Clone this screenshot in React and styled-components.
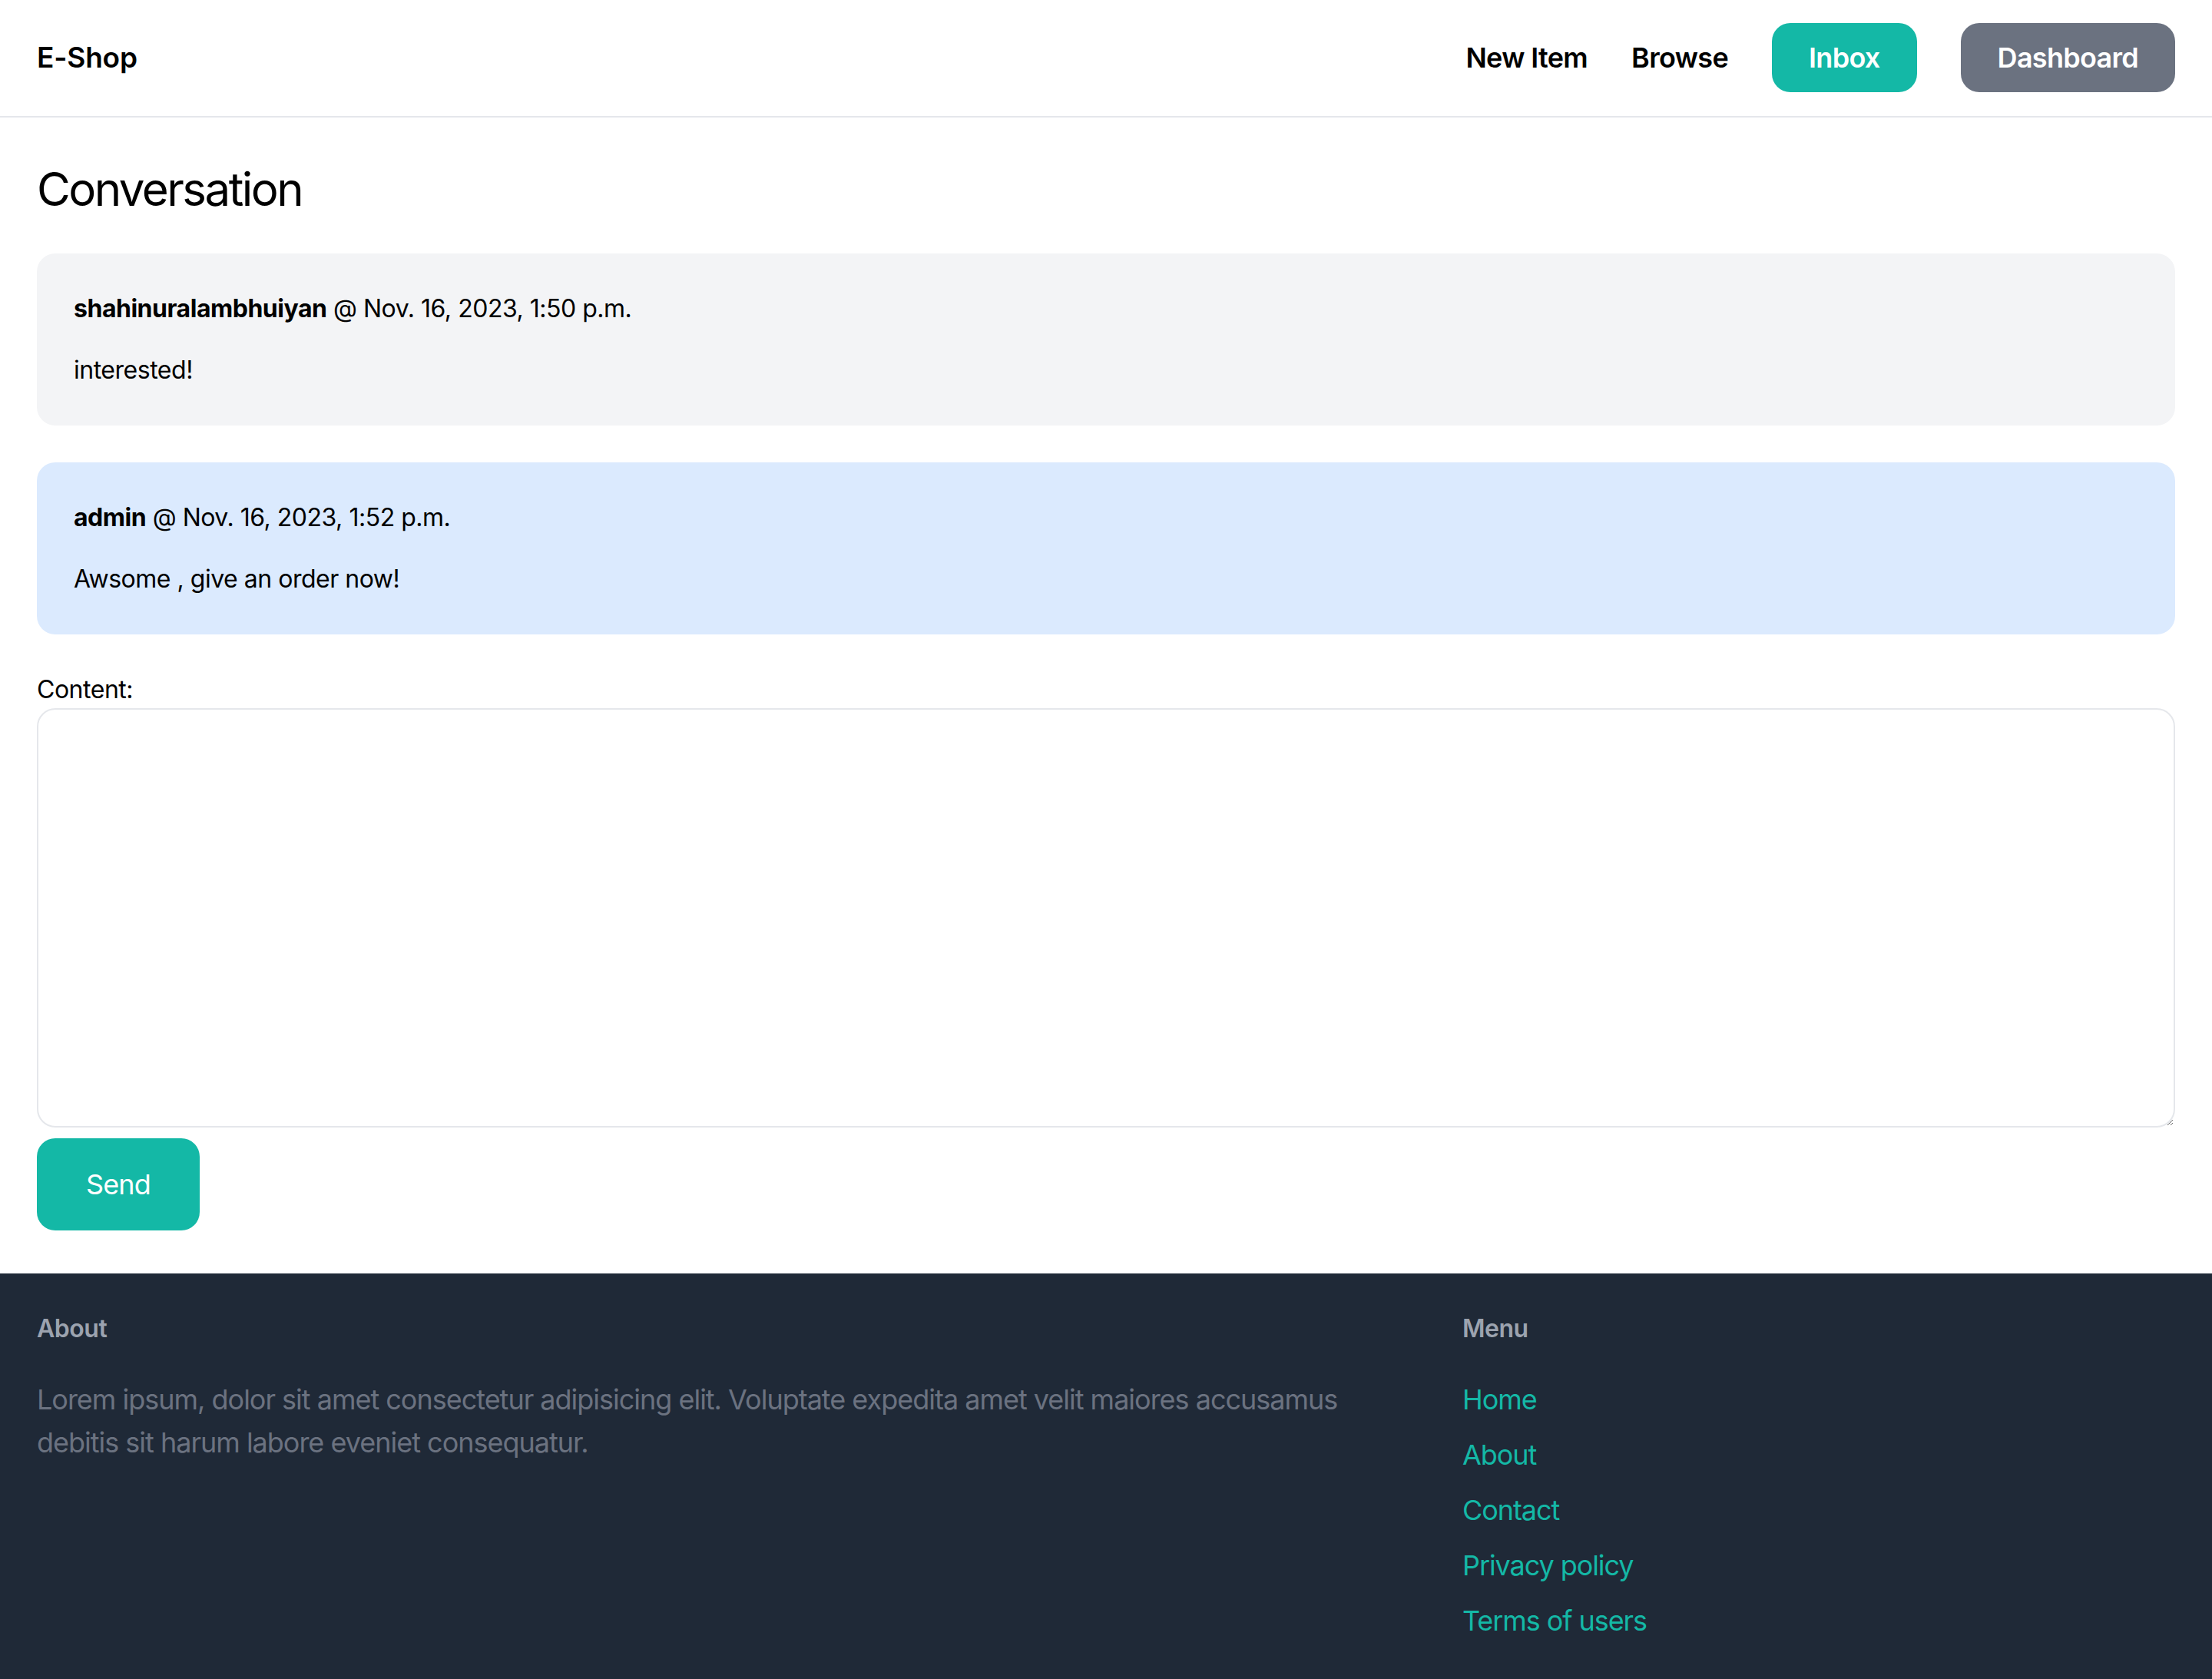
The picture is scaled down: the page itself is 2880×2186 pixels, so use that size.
import React from 'react';
import styled, { createGlobalStyle } from 'styled-components';

const GlobalStyle = createGlobalStyle`
  * {
    box-sizing: border-box;
  }
  body {
    margin: 0;
    font-family: Inter, 'Noto Sans', sans-serif;
    color: #000;
    background: #fff;
  }
  p {
    margin: 0;
  }
`;

const Nav = styled.nav`
  display: flex;
  align-items: center;
  justify-content: space-between;
  padding: 30px 48px 31px;
  border-bottom: 2px solid #e5e7eb;
`;

const Brand = styled.a`
  font-size: 37px;
  line-height: 56px;
  font-weight: 600;
  letter-spacing: -0.005em;
  color: #000;
  text-decoration: none;
`;

const NavLinks = styled.div`
  display: flex;
  align-items: center;
  gap: 57px;
`;

const NavLink = styled.a`
  font-size: 36px;
  line-height: 56px;
  font-weight: 600;
  letter-spacing: -0.018em;
  color: #000;
  text-decoration: none;
`;

const NavButton = styled.a`
  display: block;
  padding: 17px 48px;
  font-size: 36px;
  line-height: 56px;
  font-weight: 600;
  letter-spacing: -0.02em;
  color: #fff;
  text-decoration: none;
  border-radius: 24px;
  background-color: ${(p) => (p.$variant === 'gray' ? '#6b7280' : '#14b8a6')};
`;

const Main = styled.main`
  padding: 57px 48px 56px;
`;

const Title = styled.h1`
  margin: 0 0 48px;
  font-size: 60px;
  line-height: 72px;
  font-weight: 400;
  letter-spacing: -0.042em;
`;

const Message = styled.div`
  padding: 48px;
  margin-bottom: 48px;
  border-radius: 24px;
  background-color: ${(p) => (p.$mine ? '#dbeafe' : '#f3f4f6')};
  font-size: 32px;
  line-height: 48px;
  letter-spacing: -0.015em;
`;

const MessageMeta = styled.p`
  margin-bottom: 32px;
  strong {
    font-weight: 700;
  }
`;

const Label = styled.label`
  display: block;
  font-size: 32px;
  line-height: 48px;
  letter-spacing: -0.015em;
`;

const TextArea = styled.textarea`
  display: block;
  width: 100%;
  height: 546px;
  padding: 24px;
  border: 2px solid #e5e7eb;
  border-radius: 24px;
  font-family: inherit;
  font-size: 32px;
  outline: none;
  resize: vertical;
`;

const SendButton = styled.button`
  margin-top: 14px;
  padding: 32px 64px;
  border: none;
  border-radius: 24px;
  background-color: #14b8a6;
  color: #fff;
  font-family: inherit;
  font-size: 36px;
  line-height: 56px;
  letter-spacing: -0.025em;
  cursor: pointer;
`;

const Footer = styled.footer`
  display: flex;
  padding: 48px;
  background-color: #1f2937;
`;

const FooterAbout = styled.div`
  width: 66.6667%;
  padding-right: 80px;
`;

const FooterMenu = styled.div`
  width: 33.3333%;
`;

const FooterHeading = styled.h3`
  margin: 0 0 40px;
  font-size: 32px;
  line-height: 48px;
  font-weight: 600;
  letter-spacing: -0.015em;
  color: #9ca3af;
`;

const FooterText = styled.p`
  font-size: 36px;
  line-height: 56px;
  letter-spacing: -0.028em;
  color: #6b7280;
`;

const MenuList = styled.ul`
  margin: 0;
  padding: 0;
  list-style: none;
  display: flex;
  flex-direction: column;
  gap: 16px;
`;

const MenuLink = styled.a`
  display: block;
  font-size: 36px;
  line-height: 56px;
  letter-spacing: -0.03em;
  color: #14b8a6;
  text-decoration: none;
`;

const messages = [
  {
    user: 'shahinuralambhuiyan',
    date: 'Nov. 16, 2023, 1:50 p.m.',
    body: 'interested!',
    mine: false,
  },
  {
    user: 'admin',
    date: 'Nov. 16, 2023, 1:52 p.m.',
    body: 'Awsome , give an order now!',
    mine: true,
  },
];

const menu = ['Home', 'About', 'Contact', 'Privacy policy', 'Terms of users'];

function App() {
  return (
    <>
      <GlobalStyle />
      <Nav>
        <Brand href="#">E-Shop</Brand>
        <NavLinks>
          <NavLink href="#">New Item</NavLink>
          <NavLink href="#">Browse</NavLink>
          <NavButton href="#">Inbox</NavButton>
          <NavButton href="#" $variant="gray">
            Dashboard
          </NavButton>
        </NavLinks>
      </Nav>

      <Main>
        <Title>Conversation</Title>

        {messages.map((m) => (
          <Message key={m.date} $mine={m.mine}>
            <MessageMeta>
              <strong>{m.user}</strong> @ {m.date}
            </MessageMeta>
            <p>{m.body}</p>
          </Message>
        ))}

        <form onSubmit={(e) => e.preventDefault()}>
          <Label htmlFor="content">Content:</Label>
          <TextArea id="content" name="content" />
          <SendButton type="submit">Send</SendButton>
        </form>
      </Main>

      <Footer>
        <FooterAbout>
          <FooterHeading>About</FooterHeading>
          <FooterText>
            Lorem ipsum, dolor sit amet consectetur adipisicing elit. Voluptate expedita amet velit
            maiores accusamus debitis sit harum labore eveniet consequatur.
          </FooterText>
        </FooterAbout>
        <FooterMenu>
          <FooterHeading>Menu</FooterHeading>
          <MenuList>
            {menu.map((item) => (
              <li key={item}>
                <MenuLink href="#">{item}</MenuLink>
              </li>
            ))}
          </MenuList>
        </FooterMenu>
      </Footer>
    </>
  );
}

export default App;
